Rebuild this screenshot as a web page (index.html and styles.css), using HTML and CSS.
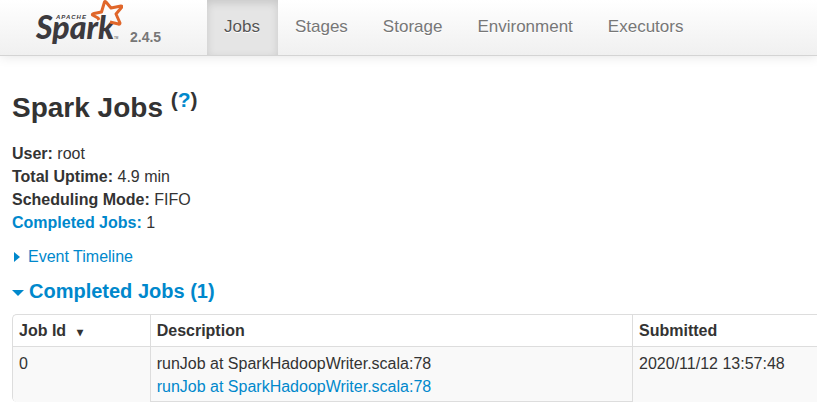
FILE: index.html
```html
<!DOCTYPE html>
<html lang="en">
<head>
    <meta charset="UTF-8">
    <meta name="viewport" content="width=device-width, initial-scale=1.0">
    <title>Spark Jobs</title>
    <link rel="stylesheet" href="styles.css">
</head>
<body>
    <nav class="navbar">
        <a href="#" class="brand">
            <svg class="logo" viewBox="0 0 88 50" role="img" aria-label="Apache Spark">
                <text class="logo-name" x="1" y="39">Spark</text>
                <text class="logo-apache" x="21" y="19">APACHE</text>
                <text class="logo-tm" x="79" y="39">TM</text>
                <path class="logo-star" d="M64 20 L63 18 L57.500 15 Q57 14 59 13.500 L66.500 12 L69.500 2 Q70 1 71 2 L76 8 L86 6 Q87.500 6 86.500 7.500 L81 14 L85 23 Q85 24.500 83.500 24 L75 22"/>
            </svg>
            <span class="version">2.4.5</span>
        </a>
        <ul class="nav">
            <li><a href="#jobs" class="active">Jobs</a></li>
            <li><a href="#stages">Stages</a></li>
            <li><a href="#storage">Storage</a></li>
            <li><a href="#environment">Environment</a></li>
            <li><a href="#executors">Executors</a></li>
        </ul>
    </nav>
    <main class="container" id="jobs">
        <h1>Spark Jobs <sup>(<a href="#help">?</a>)</sup></h1>
        <ul class="summary">
            <li><strong>User:</strong> root</li>
            <li><strong>Total Uptime:</strong> 4.9 min</li>
            <li><strong>Scheduling Mode:</strong> FIFO</li>
            <li><a href="#completed"><strong>Completed Jobs:</strong></a> 1</li>
        </ul>
        <a href="#timeline" class="timeline"><span class="arrow-right"></span>Event Timeline</a>
        <h4 id="completed"><a href="#completed"><span class="arrow-down"></span>Completed Jobs (1)</a></h4>
        <table class="jobs-table">
            <thead>
                <tr>
                    <th class="col-id">Job Id <span class="sort">▾</span></th>
                    <th class="col-description">Description</th>
                    <th>Submitted</th>
                </tr>
            </thead>
            <tbody>
                <tr>
                    <td>0</td>
                    <td class="description">runJob at SparkHadoopWriter.scala:78<br><a href="#job-0">runJob at SparkHadoopWriter.scala:78</a></td>
                    <td>2020/11/12 13:57:48</td>
                </tr>
            </tbody>
        </table>
    </main>
</body>
</html>
```
FILE: styles.css
```css
body {
    margin: 0;
    font-family: "Liberation Sans", Arial, sans-serif;
    font-size: 16px;
    line-height: 23px;
    color: #333;
    background: #fff;
}
a {
    color: #0088cc;
    text-decoration: none;
}
ul {
    list-style: none;
    margin: 0;
    padding: 0;
}
.navbar {
    display: flex;
    height: 55px;
    background: linear-gradient(to bottom, #ffffff, #f0f0f0);
    border-bottom: 1px solid #d4d4d4;
    box-shadow: 0 1px 11px rgba(0, 0, 0, 0.1);
}
.brand {
    display: flex;
    width: 172px;
    padding-left: 35px;
}
.logo {
    width: 88px;
    height: 50px;
}
.logo-name {
    font: italic 900 32px Lato, sans-serif;
    fill: #3c3a3e;
}
.logo-apache {
    font: italic bold 6px "Liberation Sans", sans-serif;
    letter-spacing: 1px;
    fill: #3c3a3e;
}
.logo-tm {
    font: 3px "Liberation Sans", sans-serif;
    fill: #3c3a3e;
}
.logo-star {
    fill: none;
    stroke: #e0662a;
    stroke-width: 3;
    stroke-linejoin: round;
}
.version {
    padding: 26px 0 0 7px;
    font-size: 14px;
    font-weight: bold;
    color: #777;
}
.nav {
    display: flex;
}
.nav a {
    display: block;
    height: 40px;
    padding: 15px 18px 0 17px;
    font-size: 17px;
    color: #777;
    text-shadow: 0 1px 0 #fff;
}
.nav .active {
    color: #555;
    background: #e5e5e5;
    box-shadow: inset 0 3px 9px rgba(0, 0, 0, 0.13);
}
.container {
    padding: 33px 0 0 12px;
}
h1 {
    margin: 0;
    font-size: 28px;
    line-height: 38px;
}
h1 sup {
    font-size: 21px;
    line-height: 0;
}
.summary {
    margin: 15px 0 11px;
}
.timeline {
    display: flex;
    align-items: center;
}
.arrow-right {
    margin: 0 8px 0 2px;
    border: 5px solid transparent;
    border-left: 6px solid #0088cc;
    border-right: 0;
}
h4 {
    margin: 12px 0 11px;
    font-size: 20px;
}
h4 a {
    display: flex;
    align-items: center;
}
.arrow-down {
    margin: 3px 5px 0 0;
    border: 6px solid transparent;
    border-top-color: #0088cc;
    border-bottom: 0;
}
.jobs-table {
    width: 100%;
    border: 1px solid #ddd;
    border-width: 1px 0 0 1px;
    border-radius: 5px 0 0 5px;
    border-spacing: 0;
    overflow: hidden;
}
th,
td {
    padding: 4px 6px;
    text-align: left;
    vertical-align: top;
}
th + th,
td + td {
    border-left: 1px solid #ddd;
}
td {
    padding: 5px 6px 3px;
    border-top: 1px solid #ddd;
    background: #f9f9f9;
}
.description {
    border-bottom: 1px solid #ddd;
}
.col-id {
    width: 17%;
}
.col-description {
    width: 60%;
}
.sort {
    margin-left: 6px;
    font-size: 12px;
    line-height: 1;
}
```
